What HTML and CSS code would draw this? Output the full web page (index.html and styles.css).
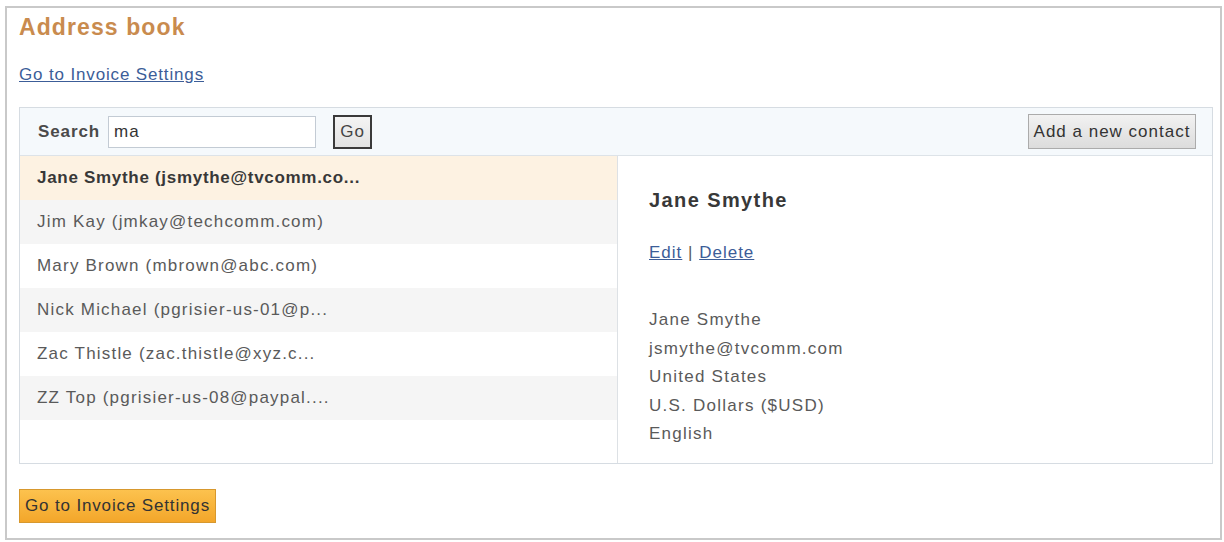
FILE: index.html
```html
<html>
  <head>
    <link rel="stylesheet" href="styles.css">
  </head>
  <body>
    <div class="frame">
      <h1 class="title">Address book</h1>
      <a href="#" class="topLink">Go to Invoice Settings</a>

      <div class="panel">
        <div class="searchBar">
          <label for="search" class="searchLabel">Search</label>
          <input type="text" id="search" class="searchInput" value="ma" />
          <button class="goButton">Go</button>
          <button class="addButton">Add a new contact</button>
        </div>

        <div class="body">
          <ul class="contacts">
            <li class="selected">Jane Smythe (jsmythe@tvcomm.co...</li>
            <li class="alt">Jim Kay (jmkay@techcomm.com)</li>
            <li>Mary Brown (mbrown@abc.com)</li>
            <li class="alt">Nick Michael (pgrisier-us-01@p...</li>
            <li>Zac Thistle (zac.thistle@xyz.c...</li>
            <li class="alt">ZZ Top (pgrisier-us-08@paypal....</li>
          </ul>

          <div class="details">
            <h2 class="name">Jane Smythe</h2>
            <div class="actions">
              <a href="#">Edit</a> | <a href="#">Delete</a>
            </div>
            <div class="info">
              <div>Jane Smythe</div>
              <div>jsmythe@tvcomm.com</div>
              <div>United States</div>
              <div>U.S. Dollars ($USD)</div>
              <div>English</div>
            </div>
          </div>
        </div>
      </div>

      <button class="settingsButton">Go to Invoice Settings</button>
    </div>
  </body>
</html>
```

FILE: styles.css
```css
* {
  box-sizing: border-box;
}

body {
  margin: 0;
  background-color: #fff;
  font-family: "Liberation Sans", Arial, sans-serif;
  font-size: 17px;
  letter-spacing: 1px;
  color: #5a5a5a;
}

.frame {
  margin: 6px 2px 0 5px;
  height: 534px;
  border: 2px solid #c9c9c9;
  padding: 5px 7px 0 12px;
}

.title {
  margin: 0;
  font-size: 23px;
  line-height: 28px;
  letter-spacing: 1.1px;
  color: #c98b4e;
}

.topLink {
  display: inline-block;
  margin-top: 24px;
  line-height: 20px;
  color: #3c5d98;
  letter-spacing: 0.85px;
}

.panel {
  margin-top: 22px;
  border: 1px solid #d6dce2;
}

.searchBar {
  display: flex;
  align-items: center;
  height: 48px;
  padding: 0 16px 0 18px;
  background-color: #f5f9fc;
  border-bottom: 1px solid #dde3e8;
}

.searchLabel {
  font-weight: bold;
  color: #4a4a4a;
  letter-spacing: 0.9px;
}

.searchInput {
  margin-left: 8px;
  width: 208px;
  height: 32px;
  padding: 0 5px;
  border: 1px solid #c3cbd4;
  font-family: inherit;
  font-size: 17px;
  letter-spacing: 1px;
  color: #333;
  outline: none;
}

.goButton {
  margin-left: 17px;
  width: 39px;
  height: 34px;
  padding: 0;
  border: 2px solid #3a3a3a;
  background: linear-gradient(#f4f4f4, #e2e2e2);
  font-family: inherit;
  font-size: 17px;
  letter-spacing: 1px;
  color: #444;
}

.addButton {
  margin-left: auto;
  width: 168px;
  height: 35px;
  padding: 0;
  border: 1px solid #ababab;
  background: linear-gradient(#f2f2f2, #dcdcdc);
  font-family: inherit;
  font-size: 17px;
  letter-spacing: 1px;
  color: #333;
}

.body {
  display: flex;
  height: 307px;
}

.contacts {
  list-style: none;
  margin: 0;
  padding: 0;
  width: 598px;
  border-right: 1px solid #dde1e5;
  letter-spacing: 1.2px;
}

.contacts li {
  height: 44px;
  line-height: 44px;
  padding-left: 17px;
  white-space: nowrap;
}

.contacts li.alt {
  background-color: #f5f5f5;
}

.contacts li.selected {
  background-color: #fdf2e2;
  font-weight: bold;
  color: #383838;
  letter-spacing: 0.7px;
}

.details {
  padding: 32px 0 0 31px;
}

.name {
  margin: 0;
  font-size: 20px;
  line-height: 24px;
  letter-spacing: 1.4px;
  color: #383838;
}

.actions {
  margin-top: 31px;
  line-height: 20px;
}

.actions a {
  color: #3c5d98;
}

.info {
  margin-top: 43px;
  line-height: 28.5px;
  letter-spacing: 1.25px;
}

.settingsButton {
  margin-top: 25px;
  width: 197px;
  height: 34px;
  padding: 0;
  border: 1px solid #d7982e;
  background: linear-gradient(#fcc24e, #f3a62a);
  font-family: inherit;
  font-size: 17px;
  letter-spacing: 0.85px;
  color: #333;
}
```
